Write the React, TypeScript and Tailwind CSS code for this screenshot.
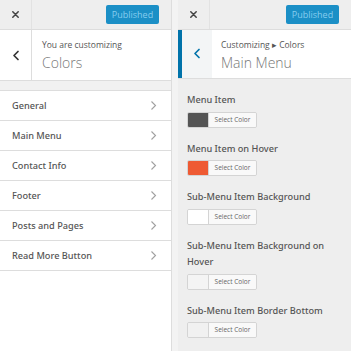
import React from "react";

const font = { fontFamily: '"Open Sans", "Noto Sans", sans-serif' };
const medium = { fontFamily: '"Noto Sans", "Open Sans", sans-serif', fontWeight: 500 };

function XIcon() {
  return (
    <svg width="9" height="9" viewBox="0 0 10 10">
      <path d="M2 2 L8 8 M8 2 L2 8" stroke="#444" strokeWidth="1.7" strokeLinecap="round" />
    </svg>
  );
}

function Back({ color }: { color: string }) {
  return (
    <svg width="8" height="11" viewBox="0 0 8 11">
      <path d="M6 1.5 L2 5.5 L6 9.5" stroke={color} strokeWidth="1.7" fill="none" strokeLinecap="round" strokeLinejoin="round" />
    </svg>
  );
}

function Chevron() {
  return (
    <svg width="7" height="11" viewBox="0 0 7 11">
      <path d="M1.5 1.5 L5.5 5.5 L1.5 9.5" stroke="#a0a0a0" strokeWidth="1.1" fill="none" />
    </svg>
  );
}

function TopBar() {
  return (
    <div className="h-[30px] bg-[#eeeeee] border-b border-[#dddddd] flex items-center">
      <div className="w-[32px] h-full flex items-center justify-center border-r border-[#e2e2e2]">
        <XIcon />
      </div>
      <div className="flex-1" />
      <div className="h-[19px] w-[53px] mr-[12px] rounded-[2px] bg-[#1b8fc6] text-[#86cdee] text-[9px] flex items-center justify-center">
        Published
      </div>
    </div>
  );
}

function ColorControl({ label, swatch }: { label: React.ReactNode; swatch: string }) {
  return (
    <div className="mb-[13px]">
      <div className="text-[9.2px] leading-[16.5px] text-[#555]" style={medium}>{label}</div>
      <div className="mt-[3px] flex h-[16px] w-[70px] border border-[#d4d4d4] rounded-[2px] overflow-hidden">
        <div className="w-[21px] h-full border-r border-[#d4d4d4]" style={{ background: swatch }} />
        <div className="flex-1 bg-[#f9f9f9] text-[6.5px] text-[#666] flex items-center justify-center">Select Color</div>
      </div>
    </div>
  );
}

const items = ["General", "Main Menu", "Contact Info", "Footer", "Posts and Pages", "Read More Button"];

export default function App() {
  return (
    <div className="w-[351px] h-[351px] flex bg-[#f5f5f5] overflow-hidden" style={font}>
      <div className="w-[172px] h-full bg-white border-r border-[#dddddd] flex flex-col">
        <TopBar />
        <div className="h-[50px] bg-white flex">
          <div className="w-[32px] h-full flex items-center justify-center border-r border-[#dddddd]">
            <Back color="#333" />
          </div>
          <div className="pl-[10px] pt-[9px] flex flex-col">
            <div className="text-[8.5px] leading-[12px] text-[#555]">You are customizing</div>
            <div className="text-[14px] leading-[20px] font-light text-[#777] mt-[2px]">Colors</div>
          </div>
        </div>
        <div className="h-[10px] bg-[#f1f1f1] border-t border-[#dddddd]" />
        <div className="border-t border-[#dddddd]">
          {items.map((it) => (
            <div key={it} className="h-[30px] border-b border-[#dddddd] flex items-center justify-between pl-[12px] pr-[14px]">
              <span className="text-[9.2px] text-[#555]" style={medium}>{it}</span>
              <Chevron />
            </div>
          ))}
        </div>
      </div>
      <div className="w-[6px] h-full bg-[#f3f3f3]" />
      <div className="flex-1 h-full bg-[#eeeeee] flex flex-col">
        <TopBar />
        <div className="h-[50px] bg-white flex border-b border-[#dddddd]">
          <div className="w-[4px] h-full bg-[#0073aa]" />
          <div className="w-[30px] h-full flex items-center justify-center bg-[#f3f5f6]">
            <Back color="#0073aa" />
          </div>
          <div className="pl-[9px] pt-[9px] flex flex-col">
            <div className="text-[8.5px] leading-[12px] text-[#555]">Customizing ▸ Colors</div>
            <div className="text-[14px] leading-[20px] font-light text-[#777] mt-[2px]">Main Menu</div>
          </div>
        </div>
        <div className="pl-[9px] pt-[13px]">
          <ColorControl label="Menu Item" swatch="#555555" />
          <ColorControl label="Menu Item on Hover" swatch="#ee5a33" />
          <ColorControl label="Sub-Menu Item Background" swatch="#ffffff" />
          <ColorControl label={<>Sub-Menu Item Background on<br />Hover</>} swatch="#f4f4f4" />
          <ColorControl label="Sub-Menu Item Border Bottom" swatch="#f1f1f1" />
        </div>
      </div>
    </div>
  );
}
